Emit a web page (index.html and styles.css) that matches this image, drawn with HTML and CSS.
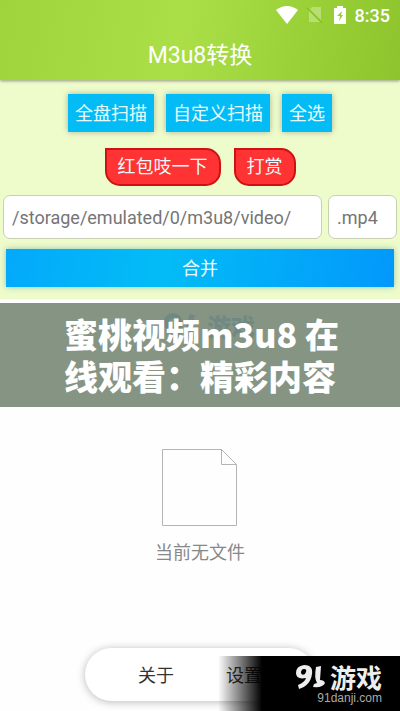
FILE: index.html
```html
<!DOCTYPE html>
<html lang="zh-CN">
<head>
<meta charset="utf-8">
<meta name="viewport" content="width=device-width, initial-scale=1">
<title>M3u8转换</title>
<link rel="stylesheet" href="styles.css">
</head>
<body>
<header class="header">
  <div class="status">
    <svg class="wifi" viewBox="0 0 22 18" aria-hidden="true"><path d="M0 4Q11-4 22 4L11 18Z"/></svg>
    <svg class="sim" viewBox="0 0 16 18" aria-hidden="true"><path d="M5 1h9v13L3 3zM2 5l11 11H2z"/><path class="slash" d="M0 2l15 15"/></svg>
    <svg class="battery" viewBox="0 0 12 18" aria-hidden="true"><path fill-rule="evenodd" d="M3 0h6v2h3v16H0V2h3zM8 5L3 10h3l-1 5 4-6H7z"/></svg>
    <span class="clock">8:35</span>
  </div>
  <h1 class="title">M3u8转换</h1>
</header>
<main class="main">
  <form class="panel">
    <div class="row scans">
      <button type="button" class="btn blue">全盘扫描</button>
      <button type="button" class="btn blue">自定义扫描</button>
      <button type="button" class="btn blue">全选</button>
    </div>
    <div class="row tips">
      <button type="button" class="btn red">红包吱一下</button>
      <button type="button" class="btn red">打赏</button>
    </div>
    <div class="fields">
      <input class="field path" type="text" aria-label="保存路径" value="/storage/emulated/0/m3u8/video/">
      <input class="field ext" type="text" aria-label="扩展名" value=".mp4">
    </div>
    <button type="button" class="btn merge">合并</button>
  </form>
  <section class="banner">
    <div class="ghost" aria-hidden="true">
      <svg class="ghost-mark" viewBox="0 0 32 26"><path d="M15 9A6 6 0 1 0 9 15Q14 15 15 9Q15 19 6 24"/><path d="M26 2L22 19Q22 23 30 21"/></svg>
      <span>游戏</span>
    </div>
    <h2 class="headline">蜜桃视频m3u8 在<br>线观看：精彩内容</h2>
  </section>
  <section class="empty">
    <svg class="file" viewBox="0 0 76 78" aria-hidden="true"><path d="M.5.5h59l15 15v61H.5zM59.500.5v15h15"/></svg>
    <p class="empty-text">当前无文件</p>
  </section>
</main>
<nav class="dock">
  <a href="#about">关于</a>
  <a href="#settings">设置</a>
</nav>
<aside class="watermark">
  <div class="brand">
    <svg class="mark" viewBox="0 0 30 24" aria-hidden="true"><path fill-rule="evenodd" d="M8 0C14 0 17 3 16 9C15 17 10 22 3 24L2 20Q9 17 10 13Q0 15 0 8Q0 1 8 0zM8 4Q5 4 5 8Q6 11 9 9Q12 4 8 4z"/><path d="M20 2L25 1 24 15Q28 15 29 18Q27 23 17 22L18 19 21 18Q18 13 20 2z"/></svg>
    <span class="brand-name">游戏</span>
  </div>
  <span class="site">91danji.com</span>
</aside>
</body>
</html>
```
FILE: styles.css
```css
* { box-sizing: border-box; }

body {
  margin: 0;
  min-height: 100vh;
  display: flex;
  flex-direction: column;
  position: relative;
  background: #fefefe;
  color: #333;
  font: 18px/24px Roboto, "Noto Sans CJK SC", sans-serif;
}

h1, h2, p { margin: 0; }
button, input { font: inherit; }

.header {
  position: relative;
  background: linear-gradient(100deg, #9fd43c 0%, #abdf48 45%, #9bd239 72%, #8ec52e 100%);
  color: #fff;
  box-shadow: 0 1px 3px rgba(0, 0, 0, .4);
}

.status {
  display: flex;
  justify-content: flex-end;
  align-items: center;
  height: 32px;
  padding-right: 10px;
}

.status svg { fill: #fff; height: 18px; margin-bottom: 2px; }
.wifi { width: 22px; margin-right: 9px; }
.sim { width: 16px; margin-right: 11px; opacity: .3; }
.slash { stroke: #4b7500; stroke-width: 1; }
.battery { width: 12px; margin-right: 9px; }
.clock { font-weight: 500; }

.title {
  padding: 9px 0;
  font-size: 23px;
  line-height: 30px;
  font-weight: 400;
  text-align: center;
}

.main { flex: 1; }

.panel {
  display: flex;
  flex-direction: column;
  padding: 14px 3px 12px;
  background: #eefbcb;
}

.row { display: flex; justify-content: center; gap: 12px; }
.tips { gap: 13px; margin: 16px 0 9px; }

.btn {
  height: 38px;
  border: 0;
  padding: 2px 7px 0;
  color: #e8fcff;
}

.blue { background: #03bcf6; box-shadow: 0 0 6px rgba(0, 0, 0, .28); }

.red {
  padding: 0 11px;
  border: 2px solid #cc1212;
  border-radius: 0 15px 15px 15px;
  background: #ff3333;
}

.fields { display: flex; gap: 6px; margin-bottom: 10px; }

.field {
  height: 44px;
  min-width: 0;
  padding: 0 8px;
  border: 1px solid #c8cfb2;
  border-radius: 7px;
  background: #fff;
  color: #757575;
}

.path { flex: 1; }
.ext { width: 69px; }

.merge {
  margin: 0 3px;
  background: linear-gradient(100deg, #03a9fb 0%, #03bcf6 40%, #0298fb 100%);
  box-shadow: 0 0 6px rgba(0, 120, 160, .4);
}

.banner {
  position: relative;
  margin-top: 4px;
  padding: 10px 0;
  background: #869583;
}

.ghost {
  position: absolute;
  top: 9px;
  left: 0;
  right: 0;
  display: flex;
  justify-content: center;
  gap: 8px;
  padding-left: 18px;
  color: #718984;
  font: 900 24px/28px "Noto Sans CJK SC", sans-serif;
}

.ghost-mark { width: 36px; height: 30px; fill: none; stroke: #718984; stroke-width: 5; }

.headline {
  position: relative;
  width: 272px;
  margin: 0 auto;
  color: #fff;
  font: 900 34px/42px "Noto Sans CJK SC", sans-serif;
  white-space: nowrap;
}

.empty {
  display: flex;
  flex-direction: column;
  align-items: center;
  padding-top: 42px;
}

.file { width: 76px; height: 78px; fill: none; stroke: #b4b4b4; }
.empty-text { margin-top: 14px; color: #888; }

.dock {
  display: flex;
  justify-content: center;
  gap: 52px;
  width: 230px;
  margin: 0 auto 10px;
  padding: 16px 0 13px;
  border-radius: 27px;
  background: #fff;
  box-shadow: 0 1px 8px rgba(0, 0, 0, .28);
}

.dock a { color: #333; text-decoration: none; }

.watermark {
  position: absolute;
  right: 0;
  bottom: 0;
  display: flex;
  flex-direction: column;
  align-items: flex-end;
  width: 182px;
  height: 55px;
  padding: 6px 18px 0 0;
  background: linear-gradient(90deg, transparent 0, #000 44px);
  color: #eee;
}

.brand { display: flex; align-items: center; gap: 4px; height: 29px; }
.mark { width: 30px; height: 24px; fill: #eee; }
.brand-name { font: 700 26px/26px "Noto Sans CJK SC", sans-serif; }
.site { color: #aaa; font: 12px/14px "Liberation Sans", sans-serif; }
```
